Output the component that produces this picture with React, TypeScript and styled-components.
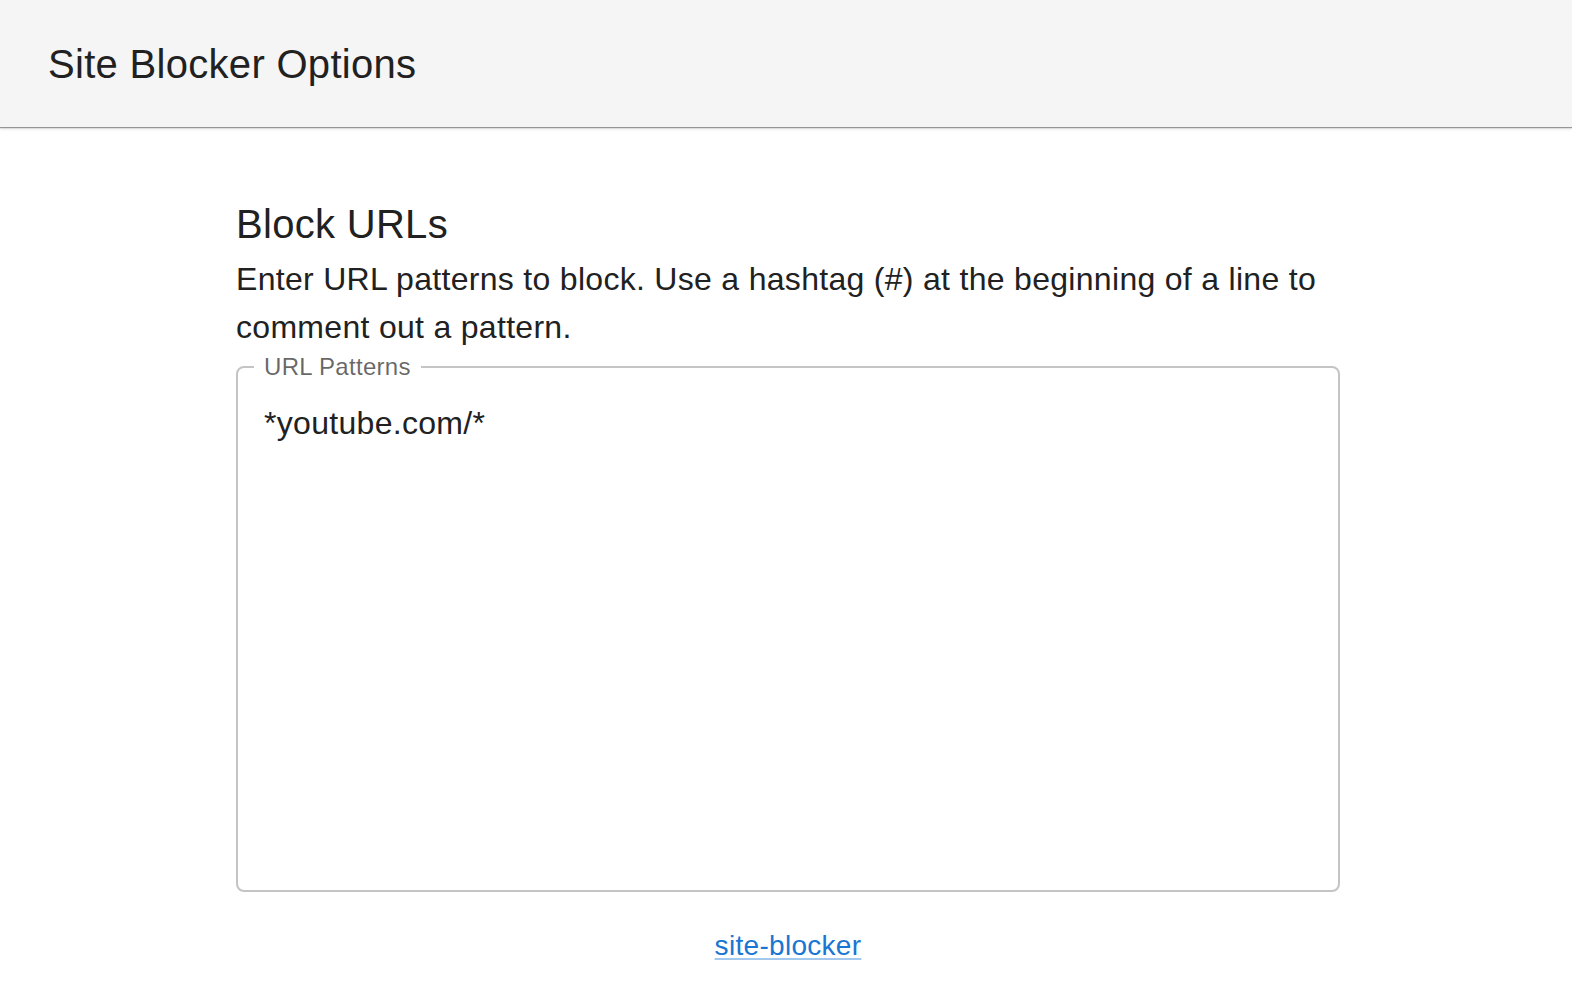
import React from "react";
import styled, { createGlobalStyle } from "styled-components";

const GlobalStyle = createGlobalStyle`
  html, body {
    margin: 0;
    padding: 0;
    background: #ffffff;
  }
  body {
    font-family: "Liberation Sans", Arial, Helvetica, sans-serif;
    color: rgba(0, 0, 0, 0.87);
  }
  * { box-sizing: border-box; }
`;

const Page = styled.div`
  display: flex;
  flex-direction: column;
  min-height: 982px;
`;

const AppBar = styled.header`
  height: 127px;
  display: flex;
  align-items: center;
  padding: 0 48px;
  background: #f5f5f5;
  box-shadow: 0 1px 1px rgba(0, 0, 0, 0.35), 0 2px 3px rgba(0, 0, 0, 0.12);
  position: relative;
  z-index: 1;
`;

const Title = styled.h1`
  margin: 0;
  font-size: 40px;
  font-weight: 400;
  line-height: 1.6;
  letter-spacing: 0.3px;
  color: #212121;
`;

const Body = styled.div`
  padding-left: 4px;
`;

const Main = styled.main`
  width: 1104px;
  margin: 0 auto;
  padding-top: 66px;
  display: flex;
  flex-direction: column;
`;

const Heading = styled.h2`
  margin: 0;
  font-size: 40px;
  font-weight: 400;
  line-height: 62px;
  letter-spacing: 0.3px;
  color: #212121;
`;

const Description = styled.p`
  margin: 0 0 4px;
  font-size: 32px;
  line-height: 48px;
  letter-spacing: 0.3px;
  color: #212121;
`;

const Field = styled.fieldset`
  margin: 0;
  padding: 0;
  border: 2px solid #c4c4c4;
  border-radius: 8px;
  min-width: 0;
`;

const Legend = styled.legend`
  margin-left: 16px;
  padding: 0 10px;
  font-size: 24px;
  line-height: 24px;
  letter-spacing: 0.3px;
  color: rgba(0, 0, 0, 0.6);
`;

const TextArea = styled.textarea`
  display: block;
  width: 100%;
  height: 523px;
  margin-top: -12px;
  padding: 33px 26px;
  border: none;
  outline: none;
  resize: none;
  background: transparent;
  font-family: "Liberation Sans", Arial, Helvetica, sans-serif;
  font-size: 32px;
  line-height: 46px;
  letter-spacing: 0.3px;
  color: #212121;
`;

const Footer = styled.footer`
  display: flex;
  justify-content: center;
  margin-top: 34px;
`;

const FooterLink = styled.a`
  font-size: 28px;
  line-height: 40px;
  letter-spacing: 0.3px;
  color: #1976d2;
  text-decoration: underline;
  text-decoration-color: rgba(25, 118, 210, 0.4);
  text-underline-offset: 3px;
`;

export default function App() {
  return (
    <>
      <GlobalStyle />
      <Page>
        <AppBar>
          <Title>Site Blocker Options</Title>
        </AppBar>
        <Body>
          <Main>
            <Heading>Block URLs</Heading>
            <Description>
              Enter URL patterns to block. Use a hashtag (#) at the beginning of a line to
              comment out a pattern.
            </Description>
            <Field>
              <Legend>URL Patterns</Legend>
              <TextArea defaultValue={"*youtube.com/*"} spellCheck={false} />
            </Field>
            <Footer>
              <FooterLink href="#">site-blocker</FooterLink>
            </Footer>
          </Main>
        </Body>
      </Page>
    </>
  );
}
